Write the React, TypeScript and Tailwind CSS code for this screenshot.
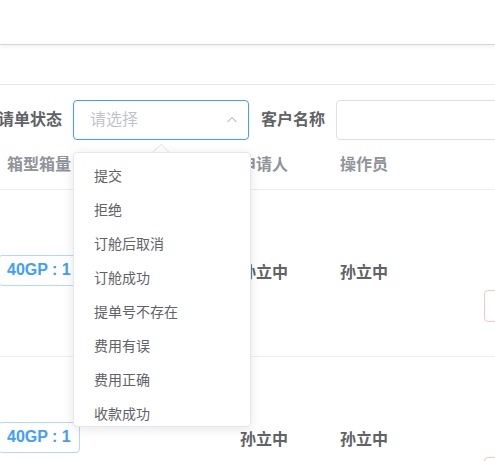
import React from 'react';

const font = { fontFamily: '"Liberation Sans", "Noto Sans CJK SC", sans-serif' };

const statusOptions = ['提交', '拒绝', '订舱后取消', '订舱成功', '提单号不存在', '费用有误', '费用正确', '收款成功'];

const rows = [
    { box: '40GP : 1', applicant: '孙立中', operator: '孙立中' },
    { box: '40GP : 1', applicant: '孙立中', operator: '孙立中' },
];

const ChevronUp = () => (
    <svg width="12" height="12" viewBox="0 0 12 12" fill="none" className="text-[#c0c4cc]">
        <path d="M1.5 8 L6 3.5 L10.5 8" stroke="currentColor" strokeWidth="1.1" />
    </svg>
);

const StatusDropdown: React.FC = () => (
    <div className="absolute left-0 top-full mt-[12px] w-[178px] z-10">
        <div className="absolute -top-[6px] left-[82px] w-3 h-3 rotate-45 bg-white border-l border-t border-[#e4e7ed]" />
        <div className="relative h-[275px] bg-white border border-[#e4e7ed] rounded-[4px] shadow-[0_2px_12px_rgba(0,0,0,0.1)] overflow-hidden">
            <ul className="py-[6px]">
                {statusOptions.map((o) => (
                    <li key={o} className="h-[34px] leading-[34px] px-5 text-[14px] text-[#606266] whitespace-nowrap">
                        {o}
                    </li>
                ))}
            </ul>
        </div>
    </div>
);

export default function App() {
    return (
        <div className="w-[495px] h-[461px] overflow-hidden bg-white" style={font}>
            {/* top bar */}
            <div className="h-[45px] bg-white border-b border-[#d4d7de] shadow-[0_2px_4px_rgba(0,0,0,0.06)]" />
            <div className="h-[40px] border-b border-[#e4e7ed]" />

            {/* filter row */}
            <div className="flex items-center pt-[15px] h-[55px]">
                <div className="w-[73px] pr-[11px] flex justify-end overflow-hidden shrink-0">
                    <span className="text-[16px] font-bold text-[#606266] whitespace-nowrap">申请单状态</span>
                </div>
                <div className="relative shrink-0">
                    <div className="w-[176px] h-[40px] border border-[#409eff] rounded-[4px] flex items-center justify-between pl-[16px] pr-[10px]">
                        <span className="text-[16px] text-[#c0c4cc]">请选择</span>
                        <ChevronUp />
                    </div>
                    <StatusDropdown />
                </div>
                <span className="ml-[12px] mr-[11px] text-[16px] font-bold text-[#606266] whitespace-nowrap shrink-0">客户名称</span>
                <div className="w-[200px] h-[40px] border border-[#dcdfe6] rounded-[4px] shrink-0" />
            </div>

            {/* table */}
            <div className="grid grid-cols-[150px_90px_100px_144px_120px] w-[604px]">
                <div className="h-[50px] flex items-center pl-[7px] border-b border-[#ebeef5] text-[16px] font-bold text-[#909399] whitespace-nowrap">箱型箱量</div>
                <div className="h-[50px] border-b border-[#ebeef5]" />
                <div className="h-[50px] flex items-center border-b border-[#ebeef5] text-[16px] font-bold text-[#909399]">申请人</div>
                <div className="h-[50px] flex items-center border-b border-[#ebeef5] text-[16px] font-bold text-[#909399]">操作员</div>
                <div className="h-[50px] border-b border-[#ebeef5]" />

                {rows.map((r, i) => (
                    <React.Fragment key={i}>
                        <div className="h-[167px] flex items-center border-b border-[#ebeef5]">
                            <span className="ml-[-2px] mt-[-6px] h-[31px] px-[8px] flex items-center border border-[#b3d8ff] rounded-[4px] text-[16px] font-bold text-[#409eff] whitespace-nowrap">
                                {r.box}
                            </span>
                        </div>
                        <div className="h-[167px] border-b border-[#ebeef5]" />
                        <div className="h-[167px] flex items-center border-b border-[#ebeef5] text-[16px] font-bold text-[#606266]">{r.applicant}</div>
                        <div className="h-[167px] flex items-center border-b border-[#ebeef5] text-[16px] font-bold text-[#606266]">{r.operator}</div>
                        <div className="h-[167px] pt-[100px] border-b border-[#ebeef5]">
                            <div className="w-[60px] h-[32px] border border-[#fbc4c4] rounded-[4px] bg-white" />
                        </div>
                    </React.Fragment>
                ))}
            </div>
        </div>
    );
}
